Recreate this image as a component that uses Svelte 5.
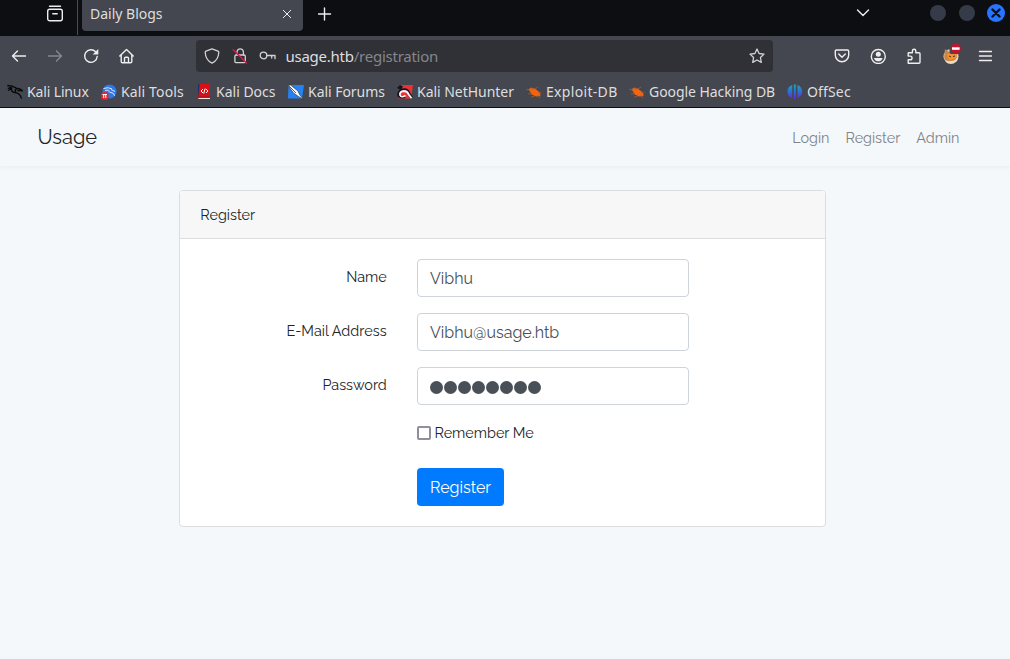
<script>
  const bookmarks = [
    { icon: 'kali', label: 'Kali Linux', width: 62, spacing: -0.14 },
    { icon: 'tools', label: 'Kali Tools', width: 63, spacing: 0.14 },
    { icon: 'docs', label: 'Kali Docs', width: 60, spacing: 0 },
    { icon: 'forums', label: 'Kali Forums', width: 77, spacing: -0.04 },
    { icon: 'nethunter', label: 'Kali NetHunter', width: 97, spacing: -0.03 },
    { icon: 'bug', label: 'Exploit-DB', width: 71, spacing: 0.32 },
    { icon: 'bug', label: 'Google Hacking DB', width: 126, spacing: -0.06 },
    { icon: 'offsec', label: 'OffSec', width: 46, spacing: 0.15 }
  ];
  let name = $state('Vibhu');
  let email = $state('Vibhu@usage.htb');
  let remember = $state(false);
</script>

<div class="window">
  <header class="tabs">
    <svg class="view" width="18" height="18" viewBox="0 0 18 18"><path d="M3.500 1.200h11" /><rect x="1.700" y="4.200" width="14.600" height="11.600" rx="2" /><path d="M6.800 8.800h4.400" /></svg>
    <div class="divider"></div>
    <div class="tab">
      <span>Daily Blogs</span>
      <svg width="10" height="10" viewBox="0 0 10 10"><path d="M1.300 1.300l7.400 7.400M8.700 1.300L1.300 8.700" /></svg>
    </div>
    <svg class="plus" width="14" height="14" viewBox="0 0 14 14"><path d="M6.500 1v12M.500 7h12" /></svg>
    <div class="grow"></div>
    <svg class="chev" width="14" height="8" viewBox="0 0 14 8"><path d="M1.500 1l5.500 5.500L12.500 1" /></svg>
    <div class="controls">
      <i></i><i></i>
      <b><svg width="10" height="10" viewBox="0 0 10 10"><path d="M1.500 1.500l7 7M8.500 1.500l-7 7" /></svg></b>
    </div>
  </header>

  <div class="toolbar">
    <div class="arrows">
      <svg width="16" height="16" viewBox="0 0 16 16"><path d="M14.500 8H1.500M6.500 3L1.500 8l5 5" /></svg>
      <svg class="dim" width="16" height="16" viewBox="0 0 16 16"><path d="M1.500 8h13M9.500 3l5 5-5 5" /></svg>
      <svg width="16" height="16" viewBox="0 0 16 16"><path d="M14.200 8.500A6.300 6.300 0 1 1 12.600 3.800" /><path class="solid" d="M15.300 1v5.600H9.700z" /></svg>
      <svg width="16" height="16" viewBox="0 0 16 16"><path d="M.800 8l6.700-6.600L14.200 8M2.200 7v6.500q0 1.300 1.300 1.300h8q1.300 0 1.300-1.300V7M5.500 14.500V10.300q0-1 1-1h2q1 0 1 1v4.200" /></svg>
    </div>
    <div class="address">
      <svg width="16" height="16" viewBox="0 0 16 16"><path d="M8 .8l6 2.300q.8.300.8 1.200C14.600 9.500 12.500 13 8 15.200 3.500 13 1.400 9.500 1.200 4.300q0-.9.800-1.200z" /></svg>
      <svg class="lock" width="16" height="16" viewBox="0 0 16 16"><path d="M5 7V4a3.200 3.200 0 0 1 6.400 0v3" /><rect x="2.900" y="7" width="10.400" height="7.700" rx="1.300" /><path class="red" d="M1.200 1.700l13.300 13.300" /></svg>
      <svg class="key" width="17" height="16" viewBox="0 0 17 16"><circle cx="4.500" cy="7.500" r="3.300" /><path d="M7.800 7.500H16v3.200M12.700 7.500v2.600" /></svg>
      <span class="url">usage.htb<em>/registration</em></span>
      <svg class="star" width="16" height="16" viewBox="0 0 16 16"><path d="M8 1l2.100 4.500 4.900.6-3.600 3.400.9 4.900L8 12l-4.300 2.400.9-4.900L1 6.100l4.900-.6z" /></svg>
    </div>
    <div class="actions">
      <svg width="16" height="16" viewBox="0 0 16 16"><path d="M2.500 2h11q1.200 0 1.200 1.200V7a6.700 6.700 0 0 1-13.400 0V3.200Q1.300 2 2.500 2zM4.700 6L8 9.200 11.300 6" /></svg>
      <svg width="16" height="16" viewBox="0 0 16 16"><circle cx="8.300" cy="8.500" r="7" /><circle class="solid" cx="8.300" cy="6.300" r="2.500" /><path class="solid" d="M4 9.900h8.600Q11.700 13.300 8.300 13.300T4 9.900z" /></svg>
      <svg width="16" height="16" viewBox="0 0 16 16"><path d="M2.200 15.200V11.800h2a1.600 1.600 0 0 0 0-3.700h-2V5.300q0-.6.600-.6h3.600V2.900a1.700 1.700 0 0 1 3.400 0v1.800h3.200q1 0 1 1v8.500q0 1-1 1z" /></svg>
      <svg class="fox" width="22" height="22" viewBox="0 0 22 22">
        <circle cx="10" cy="13.500" r="7.500" fill="#cfccc3" /><path d="M4 6l4 3h6l2 2-1 5-3 3H7l-4-3z" fill="#c98545" /><path d="M2.500 13q1 6 7 5 6 0 8-5l-1.500 5-5 2.500-5-.5z" fill="#f0dcc0" /><path d="M6 11l9-1.500 1 5.500-8 2z" fill="#f59331" /><path d="M8 13l2 1M12 13.500l2-.5" stroke="#4a3020" />
        <rect x="8.500" y="0" width="13.500" height="11" rx="2" fill="#44474f" /><circle cx="14.800" cy="5.500" r="5.100" fill="#c5142f" /><rect x="11" y="4.300" width="7.600" height="2.500" fill="#fff" />
      </svg>
      <svg class="menu" width="14" height="16" viewBox="0 0 14 16"><path d="M1.500 3.500h12M1.500 8h12M1.500 12.500h12" /></svg>
    </div>
  </div>

  <nav class="bookmarks">
    {#each bookmarks as item}
      <a href="#top">
        <svg width="16" height="16" viewBox="0 0 16 16">
          {#if item.icon === 'kali'}
            <path d="M.3 1.500L5 2.200l4.500 2M.8 4.300l4-.8M1.200 6.500l3.500-2M4.800 3.500Q3.500 8 8 8.700q5 .3 6.500 6" fill="none" stroke="#08090b" stroke-width="1.300" /><path d="M8.500 5.500q3-2.500 7 1.300-3.200-.6-5 0M9 5q-1.500 2.300 0 3.500" fill="none" stroke="#08090b" stroke-width="1.500" />
          {:else if item.icon === 'tools'}
            <circle cx="8.500" cy="7.500" r="7" fill="#2b78ee" /><path d="M2.500 4.500q5-1.800 8.500.5M4 6.500q5-1 4 1 0 1 3 1.300 2 .2 2.500 3M10 5.500l4 2" fill="none" stroke="#d8eaff" stroke-width="1" /><circle cx="3.700" cy="12" r="4" fill="#e8262c" /><path d="M1.500 10.500h4.500M2.700 10.500v3.500M4.800 10.500v3.500" stroke="#fff" fill="none" />
          {:else if item.icon === 'docs'}
            <path d="M2 0h2v14H2z" fill="#16346d" /><path d="M3.500 0H14v15H2.200z" fill="#d90f16" /><path d="M2.500 13.800H14V15H2.500z" fill="#eee" /><path d="M2.500 13.200H14" stroke="#9a1015" /><path d="M7 5L5 7l2 2M10 5l2 2-2 2M9.200 4.500l-1.500 5" fill="none" stroke="#fff" />
          {:else if item.icon === 'forums'}
            <path d="M.5 1H16l-2 13.500H0z" fill="#2382f4" /><path d="M0 1.500l2.500-.5 7.500 6 1.500 3.500 4 5-5-3L5.500 9z" fill="#fff" stroke="#23272e" stroke-width=".6" /><path d="M1 2l7 7" stroke="#59606b" fill="none" />
          {:else if item.icon === 'nethunter'}
            <path d="M4 1h12l-2 13.500H1z" fill="#ee3038" /><path d="M0 4l3-3 3 1.500L4 6z" fill="#141416" /><path d="M8 12.500Q1.500 14 1.800 10 3 5.500 8 5.800q3 .5 4 4l2.500 4" fill="none" stroke="#15161b" stroke-width="3.200" /><path d="M8.500 11.500Q4 14 3 11 2.500 7.500 7 7q3.500 0 4.500 3.200l3 4" fill="none" stroke="#f5f5f5" stroke-width="1.900" />
          {:else if item.icon === 'bug'}
            <path d="M2.500 5l2.500-1 3.500.5 3.500 2.500 2.500 3-.3 2-4 .5-4.500-2z" fill="#f2640f" /><path d="M0 5.500l4 .5M5 3l2 3M2 10l4-.5M5 13l4-1M9 5l3-2M12 8l3.500.5M12 11l2 3" fill="none" stroke="#a45a34" stroke-width=".8" />
          {:else}
            <path d="M5.200 1v13.200A7 7 0 0 1 5.200 1zM6.800.5h2v15h-2zM10.400 1a7 7 0 0 1 0 13.200z" fill="url(#sec)" />
            <defs><linearGradient id="sec" x2="0" y2="1"><stop stop-color="#18a7bd" /><stop offset=".5" stop-color="#2e6bd8" /><stop offset="1" stop-color="#7022cd" /></linearGradient></defs>
          {/if}
        </svg>
        <span style:width="{item.width}px" style:letter-spacing="{item.spacing}px">{item.label}</span>
      </a>
    {/each}
  </nav>

  <main>
    <nav class="site">
      <a class="brand" href="#top">Usage</a>
      <div class="links"><a href="#login">Login</a><a href="#register">Register</a><a href="#admin">Admin</a></div>
    </nav>
    <section class="card">
      <h1>Register</h1>
      <form>
        <label for="name">Name</label>
        <input id="name" type="text" bind:value={name} />
        <label class="mail" for="email">E-Mail Address</label>
        <input id="email" type="text" bind:value={email} />
        <label for="password">Password</label>
        <div id="password" class="field">{#each Array(8) as _}<i></i>{/each}</div>
        <label class="check"><input type="checkbox" bind:checked={remember} /><span>Remember Me</span></label>
        <button type="button">Register</button>
      </form>
    </section>
  </main>
</div>

<style>
  :global(body) { margin: 0; overflow: hidden; }
  * { box-sizing: border-box; }
  a { color: inherit; text-decoration: none; }
  svg { display: block; flex: none; }
  .window { width: 1010px; height: 659px; display: flex; flex-direction: column; font: 14.67px "Noto Sans", sans-serif; color: #dededf; background: #f4f8fb; }
  .grow { flex: 1; }
  .tabs svg, .toolbar svg:not(.fox) { fill: none; stroke: #eeeef0; stroke-width: 1.400; stroke-linejoin: round; stroke-linecap: round; }
  .tabs { height: 36px; flex: none; display: flex; background: #0d0e12; }
  .view { margin: 5px 0 0 46px; }
  .divider { width: 1px; height: 35px; margin-left: 13px; background: #4a4b50; }
  .tab { width: 221px; height: 31px; margin-left: 4px; padding: 0 11px 4px 8px; display: flex; align-items: center; justify-content: space-between; background: #44474f; border-radius: 0 0 4px 4px; font-size: 14px; }
  .tabs .tab svg { stroke-width: 1; }
  .plus { margin: 7px 0 0 15px; }
  .chev { margin: 9px 27px 0 0; }
  .controls { display: flex; gap: 13px; padding: 5px 5px 0 33px; }
  .controls i { width: 16px; height: 16px; border-radius: 50%; background: #353b49; }
  .controls b { width: 18px; height: 18px; margin-left: -1px; margin-top: -1px; border-radius: 50%; background: #2674ff; display: grid; place-items: center; }
  .tabs .controls svg { stroke: #08101f; stroke-width: 2.400; }
  .toolbar { height: 41px; flex: none; display: flex; align-items: center; background: #44474f; padding: 0 17px 1px 11px; }
  .arrows { display: flex; gap: 20px; width: 185px; }
  .toolbar .arrows .dim:not(.fox) { stroke: #85878d; }
  .toolbar svg .solid { fill: #eeeef0; stroke: none; }
  .address { width: 577px; height: 32px; display: flex; align-items: center; padding: 0 8px; background: #303136; border-radius: 4px; }
  .toolbar .address svg:not(.fox) { stroke: #d2d2d5; stroke-width: 1.300; }
  .toolbar .lock { margin-left: 12px; }
  .address .key { margin-left: 11px; }
  .toolbar .address .red { stroke: #df1747; stroke-width: 1.500; }
  .url { margin-left: 9.500px; flex: 1; font-size: 15px; letter-spacing: -.25px; }
  .url em { font-style: normal; color: #85868b; }
  .actions { display: flex; align-items: center; margin-left: 61px; }
  .actions svg + svg { margin-left: 20px; }
  .actions svg + .fox { margin: -5px 0 0 19px; }
  .actions svg + .menu { margin-left: 15px; }
  .bookmarks { height: 31px; flex: none; display: flex; gap: 12px; padding: 0 7px 2px; background: #44474f; border-bottom: 1px solid #0d0e12; }
  .bookmarks a { display: flex; align-items: center; gap: 4px; }
  .bookmarks svg { margin-top: 1px; }
  .bookmarks span { white-space: nowrap; font-size: 14px; }
  main { flex: 1; color: #212529; font: 14.4px/23px Raleway, Lato, sans-serif; }
  .site { height: 58px; padding: 0 50.500px 0 37.500px; display: flex; align-items: center; justify-content: space-between; box-shadow: 0 2px 4px rgba(0, 0, 0, .04); }
  .brand { font-size: 20px; }
  .links { display: flex; gap: 16px; color: #808386; }
  .card { width: 647px; height: 337px; margin: 24px 0 0 179px; border: 1px solid #dcdddf; border-radius: 4px; background: #fff; overflow: hidden; }
  h1 { height: 48px; margin: 0; padding: 12px 20.300px; background: #f7f7f7; border-bottom: 1px solid #dcdddf; font-size: 14.400px; font-weight: 400; line-height: 23px; }
  form { padding: 20px 0 0; display: grid; grid-template-columns: 207px 272px; column-gap: 30px; row-gap: 16px; }
  form > label { text-align: right; line-height: 36px; padding-right: .3px; }
  form > .mail { letter-spacing: .05px; }
  form > input, .field { width: 272px; height: 38px; padding: 0 12px; border: 1px solid #ced4da; border-radius: 4px; font: 16px Raleway, Lato, sans-serif; color: #495057; background: #fff; }
  .field { display: flex; align-items: center; gap: 1px; padding-top: 3px; }
  .field i { width: 13px; height: 13px; border-radius: 50%; background: #495057; }
  form > .check { grid-column: 2; display: flex; align-items: center; gap: 3.500px; height: 24px; line-height: 24px; }
  .check input { appearance: none; width: 14px; height: 14px; margin: 0; border: 2px solid #8f8f9d; border-radius: 2px; }
  button { grid-column: 2; justify-self: start; width: 87px; height: 38px; margin-top: 7px; padding: 0; border: 0; border-radius: 4px; background: #007bff; color: #fff; font: 16px Raleway, Lato, sans-serif; }
</style>
